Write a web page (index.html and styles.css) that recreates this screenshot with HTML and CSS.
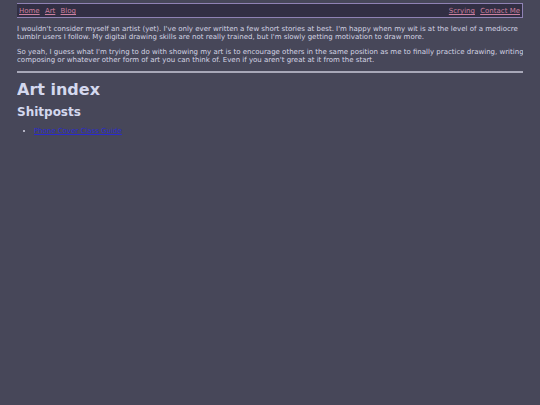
FILE: index.html
```html
<!DOCTYPE html>
<html lang="en">
<head>
    <meta charset="UTF-8">
    <meta name="viewport" content="width=device-width, initial-scale=1.0">
    <title>Art index</title>
    <link rel="stylesheet" href="styles.css">
</head>
<body>
    <nav class="topnav">
        <div class="nav-left">
            <a href="#">Home</a>
            <a href="#">Art</a>
            <a href="#">Blog</a>
        </div>
        <div class="nav-right">
            <a href="#">Scrying</a>
            <a href="#">Contact Me</a>
        </div>
    </nav>

    <main>
        <p>I wouldn't consider myself an artist (yet). I've only ever written a few short stories at best. I'm happy when my wit is at the level of a mediocre tumblr users I follow. My digital drawing skills are not really trained, but I'm slowly getting motivation to draw more.</p>
        <p>So yeah, I guess what I'm trying to do with showing my art is to encourage others in the same position as me to finally practice drawing, writing, composing or whatever other form of art you can think of. Even if you aren't great at it from the start.</p>
        <hr>
        <h1>Art index</h1>
        <h2>Shitposts</h2>
        <ul>
            <li><a href="#">Phone Cover Class Guide</a></li>
        </ul>
    </main>
</body>
</html>
```

FILE: styles.css
```css
body{
    font-family: "DejaVu Sans", Verdana, sans-serif;
    font-size: 7px;
    background: #474759;
    color: #d4d4e4;
    margin: 3px 17px 0 17px;
}

.topnav{
    display: flex;
    justify-content: space-between;
    align-items: center;
    background: #322f44;
    border: 1px solid #8f82b4;
    padding: 3px 2px 2px 2px;
    margin-left: -1px;
}
.topnav a{
    color: #cc809f;
    margin-right: 3px;
}
.topnav .nav-right a:last-child{
    margin-right: 0;
}

main p{
    margin: 7px -8px 7px 0;
    line-height: 8px;
}

hr{
    border: none;
    border-top: 2px solid #a8a8b8;
    margin: 6px 0 0 0;
}

h1{
    font-size: 16px;
    color: #d4d8ee;
    margin: 7px 0 0 0;
}
h2{
    font-size: 12px;
    color: #d4d8ee;
    margin: 6px 0 0 0;
}

ul{
    margin: 8px 0;
    padding-left: 17px;
}
ul a{
    color: #2a2ad0;
}
```
